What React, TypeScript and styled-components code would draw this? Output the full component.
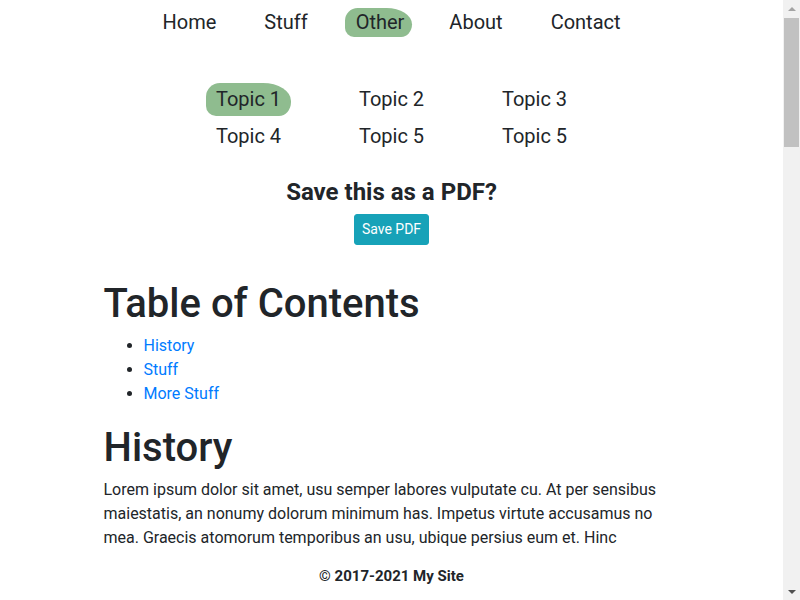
import styled, { createGlobalStyle } from 'styled-components';

const GlobalStyle = createGlobalStyle`
  html, body {
    margin: 0;
    padding: 0;
    background: #fff;
  }
  body {
    font-family: Roboto, "Noto Sans", "Liberation Sans", sans-serif;
    font-size: 16px;
    line-height: 1.5;
    color: #212529;
    padding-right: 17px;
  }
  * { box-sizing: border-box; }
`;

const leaf = '14px 28px 12px 10px / 14px 18px 14px 10px';

const Nav = styled.nav`
  display: flex;
  justify-content: center;
  padding-top: 8px;
`;

const NavItem = styled.a<{ $active?: boolean }>`
  display: block;
  font-size: 20px;
  line-height: 29px;
  height: 29px;
  margin: 0 13px;
  padding: ${p => (p.$active ? '0 8px 0 11px' : '0 11px')};
  color: #212529;
  text-decoration: none;
  background: ${p => (p.$active ? '#8fbc8f' : 'transparent')};
  border-radius: ${leaf};
`;

const Topics = styled.div`
  display: grid;
  grid-template-columns: repeat(3, 143px);
  row-gap: 4px;
  justify-content: center;
  margin-top: 46px;
`;

const TopicCell = styled.div`
  display: flex;
  justify-content: center;
`;

const Topic = styled.a<{ $active?: boolean }>`
  font-size: 20px;
  line-height: 33px;
  height: 33px;
  padding: 0 10px;
  color: #212529;
  text-decoration: none;
  background: ${p => (p.$active ? '#8fbc8f' : 'transparent')};
  border-radius: ${leaf};
`;

const PdfBlock = styled.section`
  display: flex;
  flex-direction: column;
  align-items: center;
  margin-top: 25px;
`;

const PdfTitle = styled.h4`
  margin: 0;
  font-size: 24px;
  font-weight: 700;
  line-height: 29px;
`;

const PdfButton = styled.button`
  margin-top: 7px;
  font-family: inherit;
  font-size: 14px;
  line-height: 21px;
  padding: 4px 7px;
  color: #fff;
  background: #17a2b8;
  border: 1px solid #17a2b8;
  border-radius: 3px;
  cursor: pointer;
`;

const Main = styled.main`
  width: 556px;
  margin: 35px 0 0 calc(50% - 288px);
  padding-bottom: 80px;
`;

const Heading = styled.h1`
  margin: 0 0 6px;
  font-size: 40px;
  font-weight: 500;
  line-height: 48px;
`;

const Toc = styled.ul`
  margin: 0 0 18px;
  padding-left: 40px;
  line-height: 24px;
`;

const TocLink = styled.a`
  color: #007bff;
  text-decoration: none;
`;

const Para = styled.p`
  margin: 0 0 16px;
  line-height: 24px;
`;

const Footer = styled.footer`
  position: fixed;
  left: 0;
  right: 17px;
  bottom: 0;
  height: 48px;
  display: flex;
  align-items: center;
  justify-content: center;
  background: #fff;
  font-size: 15px;
  font-weight: 700;
`;

/* stand-in for the classic browser scrollbar seen in the screenshot */
const ScrollTrack = styled.div`
  position: fixed;
  top: 0;
  right: 0;
  bottom: 0;
  width: 17px;
  background: #f1f1f1;
  display: flex;
  flex-direction: column;
  align-items: center;
`;

const ScrollArrow = styled.div<{ $down?: boolean }>`
  flex: 0 0 17px;
  width: 17px;
  display: flex;
  align-items: center;
  justify-content: center;
  &::before {
    content: '';
    width: 0;
    height: 0;
    border-left: 4px solid transparent;
    border-right: 4px solid transparent;
    ${p =>
      p.$down
        ? 'border-top: 4px solid #505050;'
        : 'border-bottom: 4px solid #a3a3a3;'}
  }
`;

const ScrollThumb = styled.div`
  width: 15px;
  height: 129px;
  margin-top: 1px;
  background: #c1c1c1;
`;

const ScrollRest = styled.div`
  flex: 1;
`;

const lorem =
  'Lorem ipsum dolor sit amet, usu semper labores vulputate cu. At per sensibus maiestatis, an nonumy dolorum minimum has. Impetus virtute accusamus no mea. Graecis atomorum temporibus an usu, ubique persius eum et. Hinc putent complectitur pri ei, no nec liber iudico. Mea ad invidunt pertinacia, cu sed nisl intellegat. Eu nec ipsum facilisi, vim alii posse ne. Pri ea falli tacimates, est at dicat omnesque voluptaria. Sea magna legimus definiebas at, iudico scripta per ex. Ius ea quas fabulas, mel ex quodsi commune. Ei eam possit docendi, eam at novum volutpat deterruisset.';

const menu = ['Home', 'Stuff', 'Other', 'About', 'Contact'];
const topics = ['Topic 1', 'Topic 2', 'Topic 3', 'Topic 4', 'Topic 5', 'Topic 5'];

export default function App() {
  return (
    <>
      <GlobalStyle />
      <Nav>
        {menu.map(m => (
          <NavItem key={m} href="#" $active={m === 'Other'}>
            {m}
          </NavItem>
        ))}
      </Nav>

      <Topics>
        {topics.map((t, i) => (
          <TopicCell key={i}>
            <Topic href="#" $active={i === 0}>
              {t}
            </Topic>
          </TopicCell>
        ))}
      </Topics>

      <PdfBlock>
        <PdfTitle>Save this as a PDF?</PdfTitle>
        <PdfButton>Save PDF</PdfButton>
      </PdfBlock>

      <Main>
        <Heading>Table of Contents</Heading>
        <Toc>
          <li><TocLink href="#history">History</TocLink></li>
          <li><TocLink href="#stuff">Stuff</TocLink></li>
          <li><TocLink href="#more">More Stuff</TocLink></li>
        </Toc>

        <Heading id="history">History</Heading>
        <Para>{lorem}</Para>
        <Para>{lorem}</Para>
        <Para>{lorem}</Para>
        <Para>{lorem}</Para>

        <Heading id="stuff">Stuff</Heading>
        <Para>{lorem}</Para>
        <Para>{lorem}</Para>
        <Para>{lorem}</Para>
        <Para>{lorem}</Para>
        <Para>{lorem}</Para>

        <Heading id="more">More Stuff</Heading>
        <Para>{lorem}</Para>
        <Para>{lorem}</Para>
        <Para>{lorem}</Para>
        <Para>{lorem}</Para>
        <Para>{lorem}</Para>
        <Para>{lorem}</Para>
      </Main>

      <Footer>© 2017-2021 My Site</Footer>

      <ScrollTrack aria-hidden>
        <ScrollArrow />
        <ScrollThumb />
        <ScrollRest />
        <ScrollArrow $down />
      </ScrollTrack>
    </>
  );
}
